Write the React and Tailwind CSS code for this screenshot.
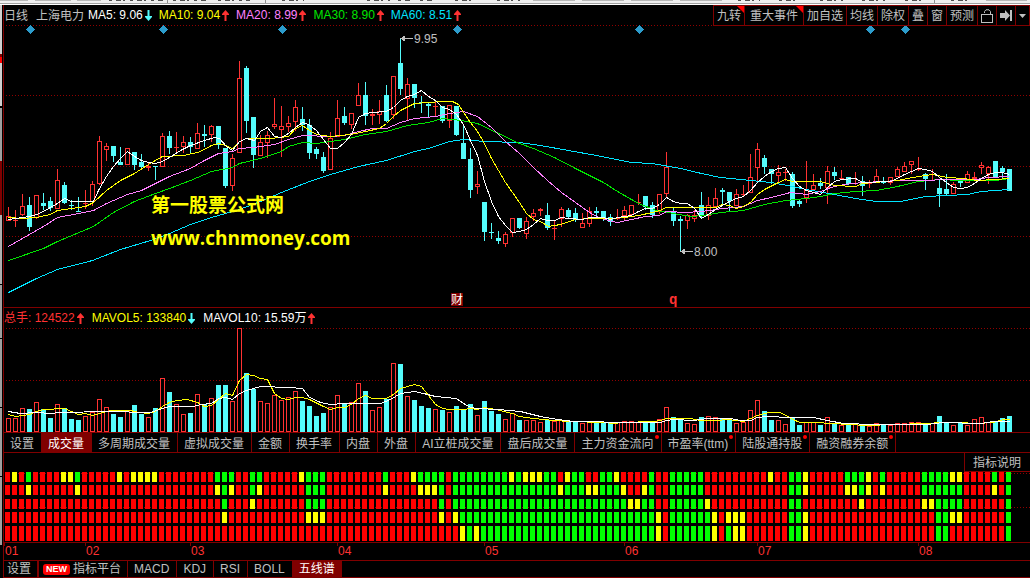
import React from "react";

const STEP = 7;
const FIRST_X = 8;

// One entry per trading day: direction (1 up, 0 down), high, body top, body bottom, low
const CANDLES = [
  [1,207,216,221,221],[1,210,220,221,227],[1,194,206,215,216],[0,197,205,227,231],[1,195,195,218,219],
  [0,193,203,206,210],[0,197,201,208,211],[1,169,180,209,209],[0,182,185,203,204],[0,200,205,206,210],
  [0,197,211,212,212],[1,190,203,204,209],[1,181,184,202,206],[1,136,141,184,185],[1,143,146,150,161],
  [0,146,146,156,162],[0,147,162,165,165],[1,148,148,165,165],[0,152,152,165,170],[0,154,162,167,170],
  [1,163,166,168,171],[0,166,166,167,180],[1,133,136,167,167],[0,131,136,148,154],[1,132,147,148,154],
  [1,136,142,147,153],[0,137,142,147,154],[1,123,133,149,149],[0,125,134,136,147],[1,125,126,135,142],
  [0,126,126,145,149],[0,148,148,186,188],[1,154,158,186,191],[1,61,78,153,153],[0,66,68,121,133],
  [0,117,117,155,168],[1,135,142,156,156],[1,131,135,143,158],[1,98,124,127,129],[1,106,126,130,157],
  [1,116,123,127,132],[1,100,107,122,131],[0,107,119,125,131],[0,119,125,153,159],[0,147,149,154,159],
  [0,152,157,171,173],[1,132,138,170,170],[1,100,118,137,137],[0,107,116,123,125],[1,113,113,125,129],
  [1,83,95,106,106],[0,82,95,116,125],[1,109,114,116,125],[1,100,111,115,124],[0,85,95,121,122],
  [1,76,76,115,119],[0,38,63,89,95],[1,78,84,99,121],[0,84,84,98,108],[0,96,102,103,113],
  [0,102,104,106,118],[1,101,106,107,116],[0,106,106,121,123],[1,105,105,121,128],[0,106,106,135,136],
  [0,125,143,159,159],[0,148,159,190,198],[1,171,184,187,194],[0,202,202,232,241],[0,223,232,233,239],
  [0,231,238,241,244],[1,232,234,244,247],[1,218,218,233,237],[0,218,218,228,229],[1,217,221,234,239],
  [1,209,213,217,221],[1,208,209,211,216],[0,203,215,228,230],[1,220,228,229,240],[1,207,209,219,227],
  [0,208,210,217,219],[0,208,213,220,222],[1,213,223,228,228],[1,207,211,224,227],[0,207,211,213,219],
  [0,211,211,219,221],[0,214,217,222,226],[1,209,218,219,220],[1,206,210,216,220],[1,205,205,215,215],
  [1,194,202,203,205],[0,196,196,207,210],[0,202,205,215,218],[1,194,194,212,214],[1,152,167,194,197],
  [0,207,211,221,226],[0,216,219,221,251],[1,214,215,221,229],[1,210,215,219,222],[0,192,205,216,218],
  [1,197,205,216,220],[1,188,198,207,207],[0,188,190,192,206],[0,192,192,201,211],[1,189,194,206,206],
  [1,185,194,195,197],[1,154,177,193,193],[1,143,149,168,181],[0,155,158,167,174],[0,169,169,174,184],
  [1,165,172,176,183],[1,169,172,173,181],[0,172,174,206,208],[0,200,201,204,207],[1,161,190,198,203],
  [1,174,185,190,191],[0,178,183,186,189],[1,166,171,188,204],[0,167,172,176,180],[1,170,178,179,180],
  [0,177,177,184,185],[1,172,183,184,185],[0,176,181,186,196],[1,180,183,184,188],[1,169,176,182,182],
  [0,177,182,183,184],[1,177,177,183,185],[1,167,169,177,177],[1,162,166,172,172],[1,161,161,165,174],
  [1,157,169,170,171],[0,173,174,179,190],[1,169,174,175,180],[0,180,188,194,207],[0,174,189,194,195],
  [1,182,184,194,194],[0,178,180,183,187],[1,171,174,183,183],[1,172,177,179,180],[1,162,165,168,174],
  [1,166,167,174,184],[0,161,161,177,177],[0,166,168,172,179],[0,169,169,191,191],
];

// Bar heights of the volume pane
const VOLUMES = [
  14,14,24,23,30,23,14,28,24,13,12,16,20,33,25,18,15,21,27,18,15,24,54,40,28,18,19,38,28,34,47,47,31,104,59,43,31,29,37,32,
  35,41,31,26,16,19,25,37,28,30,49,41,22,25,33,69,68,36,32,26,24,23,22,20,26,22,28,17,31,21,18,13,19,12,12,12,10,12,11,12,
  11,11,9,11,10,10,9,10,11,11,10,11,10,13,25,15,12,9,8,15,16,15,13,14,9,10,22,32,21,12,12,8,14,7,10,10,7,15,8,7,
  7,8,8,6,9,7,7,9,9,10,10,9,9,16,10,7,9,7,13,15,10,11,14,16,
];

const AVERAGES = [
  { color: "#00e5ff", points: "8,292 36,278 57,269 92,260 120,249 150,240 169,233 190,224 211,217 239,209 260,201 281,192 309,181 330,174 344,170 358,166 386,160 414,151 428,148 449,141 463,139 484,141 519,142 540,145 568,150 596,155 631,162 652,163 680,168 701,173 720,177 750,180 771,182 792,186 806,189 834,194 855,198 876,201 900,201 925,196 946,195 967,194 981,191 1009,189" },
  { color: "#00e600", points: "8,260 43,248 57,241 93,226 113,212 134,201 155,193 169,188 190,180 211,171 232,167 239,163 260,158 281,151 288,146 302,142 316,143 330,141 344,139 365,134 386,131 407,125 428,122 442,118 461,120 477,123 498,133 519,143 533,148 554,157 575,168 603,182 617,191 638,203 656,210 673,213 690,216 703,215 720,212 743,210 764,204 785,200 806,198 820,196 834,193 855,191 876,190 897,186 918,181 939,179 960,180 995,180 1009,178" },
  { color: "#ff80ff", points: "8,246 22,238 36,230 43,226 57,217 78,213 93,210 106,203 127,194 141,190 155,183 169,176 190,168 204,160 218,153 232,151 239,148 253,147 274,144 288,139 302,135 330,136 344,135 358,131 372,128 386,128 400,122 414,118 435,116 449,113 463,111 477,116 491,127 505,141 519,153 533,167 547,180 561,192 575,202 589,212 600,218 617,222 631,219 645,216 659,215 666,211 687,212 710,210 722,208 743,206 757,200 771,197 790,192 806,194 820,191 834,186 850,183 880,181 900,180 920,180 950,179 975,179 988,177 1009,176" },
  { color: "#ffff00", points: "8,217 22,218 36,217 50,214 57,210 71,208 85,206 93,202 106,190 120,180 134,173 148,164 162,156 183,155 197,152 204,149 211,145 218,143 225,145 232,148 239,141 246,138 270,138 288,136 295,128 302,125 309,130 316,134 330,136 350,134 365,131 379,128 386,123 393,116 400,110 414,103 428,102 442,101 452,101 458,104 463,112 470,122 477,131 484,143 491,158 498,170 505,182 512,192 519,202 526,213 533,219 540,221 548,226 560,224 575,219 590,218 610,218 624,217 638,215 652,212 659,210 666,207 694,207 715,207 722,204 729,205 736,208 743,206 750,202 757,194 764,189 778,182 785,179 792,181 820,181 834,185 855,186 862,183 897,180 907,178 918,176 932,174 947,177 963,178 977,180 995,179 1009,178" },
  { color: "#ffffff", points: "8,219 15,218 22,217 29,216 36,214 43,211 50,207 57,203 64,198 71,201 78,201 93,201 98,190 106,176 113,166 120,158 127,151 134,156 141,160 148,162 155,163 162,161 169,157 180,150 190,145 204,140 214,137 219,138 226,146 232,150 239,141 246,138 254,140 260,131 267,127 274,136 281,137 288,133 295,127 302,122 308,124 316,130 323,139 330,148 337,148 344,142 351,134 358,117 365,113 372,112 386,111 393,107 400,100 407,96 414,94 421,90 428,96 435,100 442,107 449,109 456,114 463,124 470,140 477,155 484,181 491,201 498,216 505,225 512,232 519,231 526,229 533,224 540,218 547,220 554,220 561,217 568,218 582,219 589,217 603,217 610,219 617,217 631,215 638,211 645,208 652,208 659,204 666,197 673,201 680,203 687,203 694,208 701,218 708,214 715,209 722,205 729,201 736,198 743,196 750,190 757,182 764,176 771,171 778,168 785,167 792,178 799,186 806,190 813,192 820,194 827,187 834,181 841,179 855,178 862,182 890,181 897,178 904,174 911,171 918,168 925,169 932,171 939,177 946,182 953,187 960,188 967,187 974,183 981,178 988,174 995,172 1002,172 1009,174" },
];

const VOLUME_AVERAGES = [
  { color: "#ffff00", points: "8,414 15,416 22,415 29,414 36,411 43,409 64,408 71,411 78,414 85,413 92,415 99,413 110,410 130,410 138,412 148,413 155,411 162,406 169,402 176,400 187,399 197,402 204,406 211,405 218,399 225,393 232,395 239,380 246,374 253,375 260,378 267,379 274,393 281,398 288,399 295,397 302,397 309,399 323,406 330,409 337,407 344,407 351,404 358,398 365,395 372,398 386,398 393,394 400,388 407,386 414,384 421,386 428,395 435,404 442,408 449,409 463,409 470,408 477,409 484,407 500,410 507,412 512,413 519,416 533,418 553,420 570,421 603,422 613,423 623,422 653,421 660,420 666,418 690,418 700,420 716,420 727,419 743,421 750,418 757,415 768,412 779,412 786,415 792,419 800,422 813,422 833,423 847,424 867,425 893,424 927,423 940,422 957,422 977,423 993,422 1003,419 1009,419" },
  { color: "#ffffff", points: "8,411 20,413 36,412 50,413 60,412 107,411 150,412 162,408 169,406 193,406 200,404 211,403 218,398 225,397 232,399 239,393 246,390 260,386 288,387 302,388 309,397 320,402 330,404 344,403 363,403 372,403 380,403 390,399 400,393 414,391 423,393 435,396 456,398 463,403 470,407 477,408 498,409 520,411 540,416 557,419 573,421 593,421 613,422 660,422 666,420 673,419 693,420 707,418 730,418 740,420 750,420 757,417 767,416 790,417 813,417 827,420 843,423 873,424 927,424 943,422 980,423 993,421 1009,421" },
];

// Signal strips as runs of colour: r red, y yellow, g green
const SIGNALS = [
  { y: 472, h: 10, runs: "r1 y1 r1 g1 r4 y2 g1 r5 y1 r1 y4 r8 g3 r2 g2 r5 y1 g3 r8 g1 r3 y1 g4 r1 g8 y1 g1 y3 g2 r1 y1 g2 r2 g2 y1 r4 g1 r2 g5 r9 y1 r2 g2 y1 r5 g3 y1 r1 g1 r5 g4 y2 r4 g1 r1 g1" },
  { y: 485, h: 10, runs: "r3 y1 r6 y1 r19 y1 g1 y1 r2 g1 y1 r6 g3 r8 y1 r4 y3 g1 r1 g15 y1 g3 y2 g3 y1 r2 y1 g1 r2 g5 r12 g2 y1 r5 y2 g1 y1 r1 y1 r5 g6 r4 y1 r1 g1" },
  { y: 499, h: 10, runs: "r31 g1 r3 y1 r7 g3 r16 g1 r1 g25 y2 g2 r2 g5 y1 r11 g2 r8 y1 r8 y2 g4 r6 g1" },
  { y: 512, h: 11, runs: "r31 y1 r11 y3 r16 y1 r1 y1 g28 y1 r1 g6 y1 r1 y3 r6 g2 y1 r18 g2 y2 r6 g1" },
  { y: 526, h: 15, runs: "r65 y1 g1 y1 g25 y1 r1 g6 y1 r1 g1 y2 r6 g2 y1 r18 g2 r8 g1" },
];

const SIGNAL_COLORS = { r: "#ff0000", y: "#ffff00", g: "#00ff00" };

const MONTHS = [["01", 4], ["02", 85], ["03", 190], ["04", 337], ["05", 484], ["06", 624], ["07", 757], ["08", 918]];

const DIAMONDS = [30, 163, 282, 457, 639, 870, 905];

const MA_READINGS = [
  { text: "MA5: 9.06", color: "text-white", up: false },
  { text: "MA10: 9.04", color: "text-[#ffff00]", up: true },
  { text: "MA20: 8.99", color: "text-[#ff80ff]", up: true },
  { text: "MA30: 8.90", color: "text-[#00e600]", up: true },
  { text: "MA60: 8.51", color: "text-[#00e5ff]", up: true },
];

const VOLUME_READINGS = [
  { text: "总手: 124522", color: "text-[#ff3232]", up: true },
  { text: "MAVOL5: 133840", color: "text-[#ffff00]", up: false },
  { text: "MAVOL10: 15.59万", color: "text-white", up: true },
];

const VOLUME_TABS = [
  { label: "设置" },
  { label: "成交量", active: true },
  { label: "多周期成交量" },
  { label: "虚拟成交量" },
  { label: "金额" },
  { label: "换手率" },
  { label: "内盘" },
  { label: "外盘" },
  { label: "AI立桩成交量" },
  { label: "盘后成交量" },
  { label: "主力资金流向", dot: true },
  { label: "市盈率(ttm)", dot: true },
  { label: "陆股通持股", dot: true },
  { label: "融资融券余额", dot: true },
];

const INDICATOR_TABS = ["MACD", "KDJ", "RSI", "BOLL"];

function Arrow({ up }) {
  return (
    <svg width="7" height="11" viewBox="0 0 7 11" aria-hidden="true" className="shrink-0">
      {up ? (
        <path d="M3.5 0 L7 4 V5 H4.5 V11 H2.5 V5 H0 V4 Z" fill="#ff3232" />
      ) : (
        <path d="M3.5 11 L7 7 V6 H4.5 V0 H2.5 V6 H0 V7 Z" fill="#54fcfc" />
      )}
    </svg>
  );
}

function Reading({ item }) {
  return (
    <span className="flex items-center gap-[2px]">
      <span className={item.color}>{item.text}</span>
      <Arrow up={item.up} />
    </span>
  );
}

function ToolButton({ children, wide, flagged, label }) {
  return (
    <button
      type="button"
      aria-label={label}
      className={`relative flex h-5 items-center border-b border-l border-[#800000] pt-[2px] ${wide ? "px-[5px]" : "px-[3px]"}`}
    >
      {children}
      {flagged && (
        <svg width="7" height="7" viewBox="0 0 7 7" aria-hidden="true" className="absolute top-0 right-0">
          <path d="M0 0 H7 V7 Z" fill="#ff0000" />
        </svg>
      )}
    </button>
  );
}

function GridLine({ y }) {
  return <line x1="6" x2="1030" y1={y + 0.5} y2={y + 0.5} stroke="#900000" strokeDasharray="1 2" />;
}

function Lines({ series }) {
  return (
    <g fill="none" transform="translate(0.5 0.5)">
      {series.map((s) => (
        <polyline key={s.color} points={s.points} stroke={s.color} />
      ))}
    </g>
  );
}

function Candle({ index, data }) {
  const [up, high, top, bottom, low] = data;
  const x = FIRST_X + index * STEP;
  const height = Math.max(bottom - top, 1);
  const color = up ? "#ff3232" : "#54fcfc";
  return (
    <g>
      <rect x={x} y={high} width="1" height={Math.max(low - high, 1)} fill={color} />
      {up && height > 2 ? (
        <rect x={x - 1.5} y={top + 0.5} width="4" height={height - 1} fill="#000" stroke={color} />
      ) : (
        <rect x={x - 2} y={top} width="5" height={height} fill={color} />
      )}
    </g>
  );
}

function PriceChart() {
  return (
    <svg viewBox="4 25 1026 282" role="img" aria-label="日线 K线图" className="h-auto w-full" shapeRendering="crispEdges">
      {[25, 95, 166, 236].map((y) => (
        <GridLine key={y} y={y} />
      ))}
      {DIAMONDS.map((x) => (
        <path key={x} d={`M${x + 0.5} 25 l4.5 4.5 l-4.5 4.5 l-4.5 -4.5 Z`} fill="#2c9ccc" />
      ))}
      {CANDLES.map((c, i) => (
        <Candle key={i} index={i} data={c} />
      ))}
      <Lines series={AVERAGES} />
      <g stroke="#c0c0c0" fill="#c0c0c0">
        <path d="M401 38.5 H413" />
        <path d="M401 38.5 L404 36.5 V40.5 Z" />
        <path d="M681 251.5 H693" />
        <path d="M681 251.5 L684 249.5 V253.5 Z" />
      </g>
      <g fill="#c0c0c0" className="font-['Liberation_Sans',sans-serif] text-[12px]">
        <text x="414" y="43">9.95</text>
        <text x="694" y="256">8.00</text>
      </g>
      <g fill="#ffff00" className="font-bold">
        <text x="151" y="212" className="font-['Noto_Sans_CJK_SC',sans-serif] text-[19px]">第一股票公式网</text>
        <text x="151" y="245" className="font-['Open_Sans',sans-serif] text-[19px]">www.chnmoney.com</text>
      </g>
      <rect x="451" y="293" width="12" height="13" fill="#800000" />
      <text x="451" y="304" fill="#fff" className="font-['Noto_Sans_CJK_SC',sans-serif] text-[12px]">财</text>
      <text x="669" y="304" fill="#ff3232" className="font-['Liberation_Mono',monospace] text-[14px] font-bold">q</text>
    </svg>
  );
}

function VolumeChart() {
  return (
    <svg viewBox="4 328 1026 104" role="img" aria-label="成交量" className="h-auto w-full" shapeRendering="crispEdges">
      <GridLine y={328} />
      <GridLine y={380} />
      {VOLUMES.map((h, i) => {
        const x = FIRST_X - 2 + i * STEP;
        return CANDLES[i][0] ? (
          <rect key={i} x={x + 0.5} y={432.5 - h} width="4" height={h - 1} fill="#000" stroke="#ff3232" />
        ) : (
          <rect key={i} x={x} y={432 - h} width="5" height={h} fill="#54fcfc" />
        );
      })}
      <Lines series={VOLUME_AVERAGES} />
    </svg>
  );
}

function SignalRow({ row }) {
  const cells = row.runs.split(" ").flatMap((run) => Array(Number(run.slice(1))).fill(run[0]));
  return cells.map((c, i) => (
    <rect key={i} x={5 + i * STEP} y={row.y} width="5" height={row.h} fill={SIGNAL_COLORS[c]} />
  ));
}

function SignalChart() {
  return (
    <svg viewBox="4 472 1026 88" role="img" aria-label="五线谱" className="h-auto w-full" shapeRendering="crispEdges">
      <GridLine y={473} />
      <GridLine y={507} />
      {SIGNALS.map((row) => (
        <SignalRow key={row.y} row={row} />
      ))}
      <rect x="4" y="542" width="1026" height="1" fill="#800000" />
      {MONTHS.map(([label, x]) => (
        <g key={label}>
          <rect x={x} y="543" width="1" height="3" fill="#800000" />
          <text x={x + 1} y="555" fill="#ff3232" className="font-['Liberation_Sans',sans-serif] text-[12px]">
            {label}
          </text>
        </g>
      ))}
    </svg>
  );
}

const STRIP_BUTTONS = [[0, 28], [35, 36], [77, 24], [533, 42], [582, 42], [631, 42], [680, 42], [986, 41]];
const STRIP_LABELS = [[109, 54], [173, 35], [218, 32], [282, 22], [367, 23], [398, 12], [420, 13], [455, 21], [497, 23], [738, 22], [779, 21], [820, 23], [862, 23], [905, 20], [951, 20]];

function TopStrip() {
  return (
    <svg viewBox="0 0 1030 5" aria-hidden="true" className="h-auto w-full" shapeRendering="crispEdges">
      <rect width="1030" height="5" fill="#f0f0f0" />
      {STRIP_BUTTONS.map(([x, w]) => (
        <rect key={x} x={x} y="0" width={w} height="1" fill="#b8b8b8" />
      ))}
      {STRIP_LABELS.map(([x, w]) => (
        <line key={x} x1={x} x2={x + w} y1="0.5" y2="0.5" stroke="#505050" strokeDasharray="3 4 5 2 2 5" />
      ))}
      {[167, 265, 934].map((x) => (
        <rect key={x} x={x} y="0" width="1" height="3" fill="#909090" />
      ))}
      <rect y="3" width="1030" height="1" fill="#a0a0a0" />
      <rect y="4" width="1030" height="1" fill="#ffffff" />
    </svg>
  );
}

function SideRail() {
  return (
    <div aria-hidden="true" className="flex w-[2px] shrink-0 flex-col">
      <div className="h-[49px] bg-[#d0d0d0]" />
      <div className="h-[3px] bg-[#800000]" />
      <div className="h-[6px] bg-[#ff0000]" />
      <div className="h-[43px] bg-[#d0d0d0]" />
      <div className="h-[2px] bg-black" />
      <div className="h-[53px] bg-[#a0a0a0]" />
      <div className="h-[54px] bg-[#800000]" />
      <div className="h-[69px] bg-[#b0b0b0]" />
      <div className="h-[54px] border-t border-black bg-[#a0a0a0]" />
      <div className="h-[69px] border-t border-black bg-[#a0a0a0]" />
      <div className="h-[69px] border-t border-black bg-[#a0a0a0]" />
      <div className="h-[69px] border-t border-black bg-[#a0a0a0]" />
    </div>
  );
}

export default function App() {
  return (
    <div className="min-h-screen bg-black font-['Liberation_Sans','Noto_Sans_CJK_SC',sans-serif] text-[12px] leading-[16px] whitespace-nowrap text-[#c0c0c0]">
      <TopStrip />
      <div className="flex">
        <SideRail />
        <main className="ml-px min-w-0 flex-1 border-l border-[#800000]">
          <header className="flex h-5 items-center justify-between">
            <div className="flex items-center gap-1">
              <h1 className="flex gap-2 pt-[2px]">
                <span>日线</span>
                <span>上海电力</span>
              </h1>
              <div className="flex items-center gap-[7px]">
                {MA_READINGS.map((m) => (
                  <Reading key={m.text} item={m} />
                ))}
              </div>
            </div>
            <div className="flex border-t border-r border-[#800000]">
              <ToolButton flagged>九转</ToolButton>
              <ToolButton wide flagged>重大事件</ToolButton>
              <ToolButton>加自选</ToolButton>
              <ToolButton>均线</ToolButton>
              <ToolButton>除权</ToolButton>
              <ToolButton>叠</ToolButton>
              <ToolButton>窗</ToolButton>
              <ToolButton>预测</ToolButton>
              <ToolButton label="解锁">
                <svg width="12" height="15" viewBox="0 0 12 15" fill="none" stroke="#c0c0c0" aria-hidden="true">
                  <path d="M0.5 5.5 H11.5 V13.5 H0.5 Z" shapeRendering="crispEdges" />
                  <path d="M3.5 4 V2.5 L5 0.8 H8 L9.5 2.5 V5.5" />
                </svg>
              </ToolButton>
              <ToolButton label="移到最新">
                <svg width="12" height="12" viewBox="0 0 12 12" fill="#c0c0c0" aria-hidden="true">
                  <path d="M0 3 H5 V0 L10 5.5 L5 11 V8 H0 Z" />
                  <path d="M10 0 H12 V11 H10 Z" />
                </svg>
              </ToolButton>
              <ToolButton label="更多">
                <svg width="7" height="4" viewBox="0 0 7 4" fill="#c0c0c0" aria-hidden="true">
                  <path d="M0 0 H7 L3.5 4 Z" />
                </svg>
              </ToolButton>
            </div>
          </header>

          <PriceChart />

          <div className="flex h-[21px] items-center gap-2 border-t border-[#800000]">
            {VOLUME_READINGS.map((m) => (
              <Reading key={m.text} item={m} />
            ))}
          </div>
          <VolumeChart />

          <nav className="flex h-[21px] border-y border-[#800000]">
            {VOLUME_TABS.map((t) => (
              <button
                key={t.label}
                type="button"
                className={`relative flex items-center border-r border-[#800000] pt-[2px] pr-[7px] pl-[6px] ${t.active ? "bg-[#800000] text-white" : ""}`}
              >
                {t.label}
                {t.dot && <span className="absolute top-[2px] right-[2px] size-1 rounded-full bg-[#ff0000]" />}
              </button>
            ))}
          </nav>

          <div className="flex h-[19px] justify-end">
            <button type="button" className="flex items-center border-b border-l border-[#800000] pt-[2px] pr-[9px] pl-2">
              指标说明
            </button>
          </div>
          <SignalChart />

          <nav className="flex h-[18px] border-y border-[#800000]">
            <button type="button" className="flex items-center border-r-2 border-[#800000] pr-[6px] pl-[3px]">
              设置
            </button>
            <button type="button" className="flex items-center gap-[3px] border-r border-[#800000] pr-[6px] pl-1">
              <span className="rounded-[3px] bg-[#ff0000] px-[3px] text-[9px] leading-[11px] font-bold text-white">NEW</span>
              指标平台
            </button>
            {INDICATOR_TABS.map((t) => (
              <button key={t} type="button" className="flex items-center border-r border-[#800000] pr-[7px] pl-[6px]">
                {t}
              </button>
            ))}
            <button type="button" className="flex items-center bg-[#800000] pr-[7px] pl-[6px] text-white">
              五线谱
            </button>
          </nav>
        </main>
      </div>
    </div>
  );
}
